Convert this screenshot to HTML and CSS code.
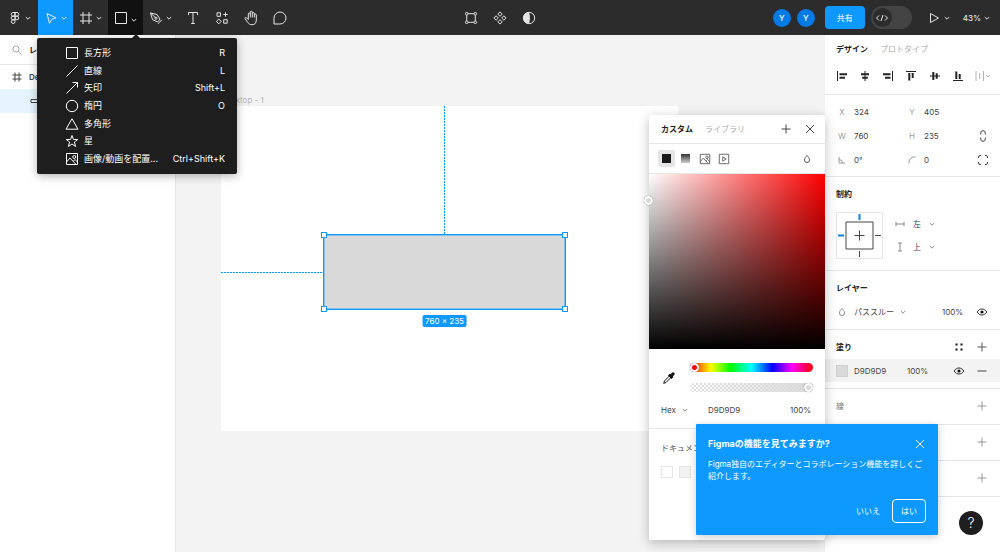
FILE: index.html
```html
<!DOCTYPE html>
<html lang="ja">
<head>
<meta charset="utf-8">
<meta name="viewport" content="width=device-width, initial-scale=1">
<title>Figma</title>
<link rel="stylesheet" href="styles.css">
</head>
<body>
<svg class="sprite" aria-hidden="true">
  <symbol id="chevron" viewBox="0 0 6 6"><path d="M.8 2 3 4.2 5.2 2"/></symbol>
  <symbol id="plus" viewBox="0 0 12 12"><path d="M6 1.500v9M1.500 6h9"/></symbol>
  <symbol id="close" viewBox="0 0 12 12"><path d="m2 2 8 8M10 2l-8 8"/></symbol>
  <symbol id="frame" viewBox="0 0 14 14"><path d="M4 1v12M10 1v12M1 4h12M1 10h12"/></symbol>
  <symbol id="drop" viewBox="0 0 12 12"><path d="M6 2.500C5 3.900 3.400 5.200 3.400 6.900a2.600 2.600 0 0 0 5.200 0C8.600 5.200 7 3.900 6 2.500Z"/></symbol>
  <symbol id="eye" viewBox="0 0 12 12"><path d="M1.200 6C2.400 4 4.100 3 6 3s3.600 1 4.800 3C9.600 8 7.900 9 6 9S2.400 8 1.200 6Z" stroke-width=".9"/><circle cx="6" cy="6" r="1.600" fill="currentColor" stroke="none"/></symbol>
  <symbol id="picture" viewBox="0 0 14 14"><path d="M1.500 1.500h11v11h-11zM1.500 10l3.500-4 6 6.500"/><circle cx="9.300" cy="5" r="1.500"/><path d="m8.500 9 1.500-1.500 2.500 2.500"/></symbol>
  <symbol id="square" viewBox="0 0 14 14"><path d="M1.500 1.500h11v11h-11z"/></symbol>
</svg>

<div class="app">
  <header class="topbar">
    <nav class="tools" aria-label="ツール">
      <button class="tool tool-menu" aria-label="メインメニュー"><svg class="i14" viewBox="0 0 14 14"><path d="M7 1.500H5a1.830 1.830 0 0 0 0 3.660h2zM7 5.160H5a1.830 1.830 0 0 0 0 3.660h2zM7 8.820H5a1.830 1.830 0 1 0 2 1.830zM7 1.500h2a1.830 1.830 0 0 1 0 3.660H7z"/><circle cx="8.900" cy="7" r="1.830"/></svg><svg class="i6"><use href="#chevron"/></svg></button>
      <button class="tool tool-wide tool-active" aria-label="移動"><svg class="i14" viewBox="0 0 14 14"><path d="m3 2.500 9 4.300-4.200 1.500-2.300 4z"/></svg><svg class="i6"><use href="#chevron"/></svg></button>
      <button class="tool tool-wide" aria-label="フレーム"><svg class="i14"><use href="#frame"/></svg><svg class="i6"><use href="#chevron"/></svg></button>
      <button class="tool tool-wide tool-open" aria-label="シェイプ" aria-expanded="true"><svg class="i14"><use href="#square"/></svg><svg class="i6"><use href="#chevron"/></svg></button>
      <button class="tool tool-wide" aria-label="ペン"><svg class="i14" viewBox="0 0 14 14"><path d="M1.500 2 8 3.500l3 4.500-2.500 3-5-2.500zM1.500 2l5 4.800M9 12.800l3.800-4"/><circle cx="7" cy="7.200" r="1.100"/></svg><svg class="i6"><use href="#chevron"/></svg></button>
      <button class="tool" aria-label="テキスト"><svg class="i14" viewBox="0 0 14 14"><path d="M2.500 4V1.500h9V4M7 1.500v11M5.200 12.500h3.600"/></svg></button>
      <button class="tool" aria-label="リソース"><svg class="i14" viewBox="0 0 14 14"><path d="M2 1.800h3.500v3.500H2zM8.700 8.700h3.500v3.500H8.700zM10.500 1.300v4.400M8.300 3.500h4.400M3.800 8l2.400 2.400-2.400 2.400-2.400-2.400z"/></svg></button>
      <button class="tool" aria-label="手のひら"><svg class="i16" viewBox="0 0 16 16"><path d="M5.300 9.500V4a1 1 0 0 1 2 0V2.200a1 1 0 0 1 2 0V3.500a1 1 0 0 1 2 0V5a1 1 0 0 1 2 0v5c0 3-1.500 4.700-4.300 4.700-2.300 0-3.400-1-4.300-2.500L2 8.700c-.5-1 .8-1.800 1.600-.9zM7.300 4v3.500M9.300 3.500v4M11.300 5v2.500"/></svg></button>
      <button class="tool" aria-label="コメント"><svg class="i16" viewBox="0 0 16 16"><path d="M2 14V8a6 6 0 1 1 6 6z"/></svg></button>
    </nav>
    <div class="tools">
      <button class="tool" aria-label="オブジェクトを編集"><svg class="i14" viewBox="0 0 14 14"><path d="M4 2.700h6M4 11.300h6M2.700 4v6M11.300 4v6"/><circle cx="2.700" cy="2.700" r="1.300"/><circle cx="11.300" cy="2.700" r="1.300"/><circle cx="2.700" cy="11.300" r="1.300"/><circle cx="11.300" cy="11.300" r="1.300"/></svg></button>
      <button class="tool" aria-label="コンポーネントを作成"><svg class="i14" viewBox="0 0 14 14"><path d="m7 .9 2.200 2.200L7 5.300 4.800 3.100zM7 8.700l2.200 2.200L7 13.100l-2.200-2.200zM3.100 4.800 5.300 7 3.100 9.200.9 7zM10.900 4.800 13.100 7l-2.200 2.200L8.700 7z"/></svg></button>
      <button class="tool" aria-label="マスク"><svg class="i14" viewBox="0 0 14 14"><circle cx="7" cy="7" r="5.700"/><path d="M7 1.300a5.700 5.700 0 0 0 0 11.400c1.300-3.600 1.300-7.800 0-11.400Z" fill="currentColor" stroke="none"/></svg></button>
    </div>
    <div class="account">
      <span class="avatar">Y</span>
      <span class="avatar">Y</span>
      <button class="share">共有</button>
      <label class="devmode"><input type="checkbox" role="switch" aria-label="開発モード"><span class="knob"><svg class="i14" viewBox="0 0 14 14"><path d="M4 4.500 1.500 7 4 9.500M10 4.500 12.500 7 10 9.500M8 4 6 10"/></svg></span></label>
      <button class="present" aria-label="プレゼンテーション"><svg class="i12" viewBox="0 0 12 12"><path d="m2.500 1.500 8 4.500-8 4.500z"/></svg><svg class="i6"><use href="#chevron"/></svg></button>
      <button class="zoom">43%<svg class="i6"><use href="#chevron"/></svg></button>
    </div>
  </header>

  <aside class="layers">
    <div class="layers-head"><svg class="i12" viewBox="0 0 12 12"><circle cx="5" cy="5" r="3"/><path d="m7.300 7.300 3.200 3.200"/></svg><h2>レイヤー</h2></div>
    <div class="layer"><svg class="i10" viewBox="0 0 10 10"><path d="M3 .5v9M7 .5v9M.5 3h9M.5 7h9"/></svg><span>Desktop - 1</span></div>
    <div class="layer layer-child"><svg class="i10" viewBox="0 0 10 10" role="img" aria-label="長方形レイヤー"><path d="M1 3.500h8v3H1z"/></svg></div>
  </aside>

  <main class="canvas">
    <div class="artboard">
      <span class="artboard-name">Desktop - 1</span>
      <i class="guide-v"></i><i class="guide-h"></i>
      <div class="shape"><i class="handle tl"></i><i class="handle tr"></i><i class="handle bl"></i><i class="handle br"></i><span class="size">760 × 235</span></div>
    </div>
  </main>

  <aside class="inspector">
    <section class="section align-section">
      <div class="tabs"><button class="tab tab-on">デザイン</button><button class="tab">プロトタイプ</button></div>
      <div class="aligns">
        <button aria-label="左揃え"><svg class="i12" viewBox="0 0 12 12"><path d="M1.500 1v10"/><path class="bar" d="M3.500 4.300H11M3.500 7.700H9"/></svg></button>
        <button aria-label="左右中央揃え"><svg class="i12" viewBox="0 0 12 12"><path d="M6 1v10"/><path class="bar" d="M2 4.300h8M3.200 7.700h5.600"/></svg></button>
        <button aria-label="右揃え"><svg class="i12" viewBox="0 0 12 12"><path d="M10.500 1v10"/><path class="bar" d="M1 4.300h7.500M3 7.700h5.500"/></svg></button>
        <button aria-label="上揃え"><svg class="i12" viewBox="0 0 12 12"><path d="M1 1.500h10"/><path class="bar" d="M4.300 3v7.500M7.700 3v5"/></svg></button>
        <button aria-label="上下中央揃え"><svg class="i12" viewBox="0 0 12 12"><path d="M1 6h10"/><path class="bar" d="M4.300 2v8M7.700 3.200v5.600"/></svg></button>
        <button aria-label="下揃え"><svg class="i12" viewBox="0 0 12 12"><path d="M1 10.500h10"/><path class="bar" d="M4.300 1.500V9M7.700 4v5"/></svg></button>
        <button class="muted" aria-label="等間隔に分布"><svg class="distribute" viewBox="0 0 16 12"><path d="M1 1v10M8.500 1v10M4.700 3v6M11 5l2 2 2-2"/></svg></button>
      </div>
    </section>

    <section class="section tight">
      <div class="props">
        <label class="field"><span>X</span><input value="324"></label>
        <label class="field"><span>Y</span><input value="405"></label>
        <label class="field prop-left"><span>W</span><input value="760"></label>
        <label class="field"><span>H</span><input value="235"></label>
        <button aria-label="縦横比を固定"><svg class="i12" viewBox="0 0 12 12"><path d="M3.700 4.500V3a2.300 2.300 0 0 1 4.600 0v1.500M3.700 7.500V9a2.300 2.300 0 0 0 4.600 0V7.500"/></svg></button>
        <label class="field prop-left"><svg class="i10" viewBox="0 0 10 10" role="img" aria-label="回転"><path d="M2 2v6h6M2 4.500A3.500 3.500 0 0 1 5.500 8"/></svg><input value="0°"></label>
        <label class="field"><svg class="i10" viewBox="0 0 10 10" role="img" aria-label="角の半径"><path d="M2 8.500V7a5 5 0 0 1 5-5h1.500"/></svg><input value="0"></label>
        <button aria-label="個別の角"><svg class="i12" viewBox="0 0 12 12"><path d="M1.500 4V3a1.500 1.500 0 0 1 1.500-1.500h1M8 1.500h1A1.500 1.500 0 0 1 10.500 3v1M10.500 8v1A1.500 1.500 0 0 1 9 10.500H8M4 10.500H3A1.500 1.500 0 0 1 1.500 9V8"/></svg></button>
      </div>
    </section>

    <section class="section">
      <div class="title"><h2>制約</h2></div>
      <div class="constraints">
        <svg class="constraint-box" viewBox="0 0 47 47"><path class="outline" d="M.5.500h46v46H.5z"/><path d="M10 10h27v27H10zM23.500 18.500v10M18.500 23.500h10M39 23.500h6M23.500 39v6"/><path class="on" d="M23.500 2v6M2 23.500h6"/></svg>
        <div class="axes">
          <label class="pick"><svg class="i10" viewBox="0 0 10 10" role="img" aria-label="水平方向"><path d="M1 3v4M9 3v4M1 5h8"/></svg><select><option>左</option></select><svg class="i6"><use href="#chevron"/></svg></label>
          <label class="pick"><svg class="i10" viewBox="0 0 10 10" role="img" aria-label="垂直方向"><path d="M3 1h4M3 9h4M5 1v8"/></svg><select><option>上</option></select><svg class="i6"><use href="#chevron"/></svg></label>
        </div>
      </div>
    </section>

    <section class="section loose">
      <div class="title"><h2>レイヤー</h2></div>
      <div class="row">
        <label class="pick blend"><svg class="i12" role="img" aria-label="ブレンド"><use href="#drop"/></svg><select><option>パススルー</option></select><svg class="i6"><use href="#chevron"/></svg></label>
        <input class="opacity" value="100%" aria-label="不透明度">
        <button class="dark" aria-label="表示"><svg class="i12"><use href="#eye"/></svg></button>
      </div>
    </section>

    <section class="section loose">
      <div class="title"><h2>塗り</h2><button class="dark" aria-label="スタイル"><svg class="i12" viewBox="0 0 12 12"><path class="dots" d="M2.500 2.500h2v2h-2zM7.500 2.500h2v2h-2zM2.500 7.500h2v2h-2zM7.500 7.500h2v2h-2z"/></svg></button><button aria-label="塗りを追加"><svg class="i12"><use href="#plus"/></svg></button></div>
      <div class="row row-on">
        <button class="chip" aria-label="塗りの色"></button>
        <input class="hex" value="D9D9D9" aria-label="塗りのカラーコード">
        <input class="opacity" value="100%" aria-label="塗りの不透明度">
        <button class="dark push" aria-label="表示"><svg class="i12"><use href="#eye"/></svg></button>
        <button aria-label="塗りを削除"><svg class="i12" viewBox="0 0 12 12"><path d="M1.500 6h9"/></svg></button>
      </div>
    </section>

    <section class="section loose collapsed"><div class="title"><h2>線</h2><button aria-label="線を追加"><svg class="i12"><use href="#plus"/></svg></button></div></section>
    <section class="section loose collapsed" aria-label="エフェクト"><div class="title"><button class="push" aria-label="エフェクトを追加"><svg class="i12"><use href="#plus"/></svg></button></div></section>
    <section class="section loose collapsed" aria-label="エクスポート"><div class="title"><button class="push" aria-label="エクスポートを追加"><svg class="i12"><use href="#plus"/></svg></button></div></section>
  </aside>
</div>

<div class="menu" role="menu">
  <button role="menuitem"><svg class="i14"><use href="#square"/></svg><span>長方形</span><kbd>R</kbd></button>
  <button role="menuitem"><svg class="i14" viewBox="0 0 14 14"><path d="m1.500 12.500 11-11"/></svg><span>直線</span><kbd>L</kbd></button>
  <button role="menuitem"><svg class="i14" viewBox="0 0 14 14"><path d="m1.500 12.500 11-11M7.500 1.500h5v5"/></svg><span>矢印</span><kbd>Shift+L</kbd></button>
  <button role="menuitem"><svg class="i14" viewBox="0 0 14 14"><circle cx="7" cy="7" r="5.700"/></svg><span>楕円</span><kbd>O</kbd></button>
  <button role="menuitem"><svg class="i14" viewBox="0 0 14 14"><path d="m7 1.800 6 10.400H1z"/></svg><span>多角形</span></button>
  <button role="menuitem"><svg class="i14" viewBox="0 0 14 14"><path d="m7 1.500 1.500 4h4.200L9.400 8.100l1.200 4.400L7 10l-3.600 2.500 1.200-4.400L1.300 5.500h4.200z"/></svg><span>星</span></button>
  <button role="menuitem"><svg class="i14"><use href="#picture"/></svg><span>画像/動画を配置...</span><kbd>Ctrl+Shift+K</kbd></button>
</div>

<div class="picker" role="dialog" aria-label="カラー">
  <div class="picker-head">
    <button class="tab tab-on">カスタム</button><button class="tab">ライブラリ</button>
    <button class="push" aria-label="スタイルを追加"><svg class="i12"><use href="#plus"/></svg></button>
    <button aria-label="閉じる"><svg class="i12"><use href="#close"/></svg></button>
  </div>
  <div class="kinds">
    <button class="kind kind-on" aria-label="単色"><span class="solid"></span></button>
    <button class="kind" aria-label="グラデーション"><span class="solid gradient"></span></button>
    <button class="kind" aria-label="画像"><svg class="i12"><use href="#picture"/></svg></button>
    <button class="kind" aria-label="動画"><svg class="i12" viewBox="0 0 14 14"><path d="M1.500 1.500h11v11h-11zM5.500 4.500 9.500 7l-4 2.500z"/></svg></button>
    <button class="push" aria-label="ブレンドモード"><svg class="i12"><use href="#drop"/></svg></button>
  </div>
  <div class="spectrum"><i class="spot"></i></div>
  <div class="mixer">
    <button class="dark" aria-label="スポイト"><svg class="i14" viewBox="0 0 14 14"><path d="M7.500 5 2.500 10l-.8 2.300L4 11.500l5-5"/><path d="M6.500 4.500 8 3l.8.800 1.500-1.800c1-1 2.700.6 1.700 1.700L10.200 5.200l.8.800-1.500 1.500z" fill="currentColor"/></svg></button>
    <div class="sliders">
      <input class="slider hue" type="range" min="0" max="360" value="0" aria-label="色相">
      <input class="slider alpha" type="range" min="0" max="100" value="100" aria-label="アルファ">
    </div>
  </div>
  <div class="code">
    <label class="pick"><select aria-label="形式"><option>Hex</option></select><svg class="i6"><use href="#chevron"/></svg></label>
    <input class="hex" value="D9D9D9" aria-label="カラーコード">
    <input class="opacity" value="100%" aria-label="不透明度">
  </div>
  <div class="document"><span>ドキュメントカラー</span>
    <div class="swatches"><button class="swatch" aria-label="FFFFFF"></button><button class="swatch swatch-grey" aria-label="F2F2F2"></button></div>
  </div>
</div>

<button class="help" aria-label="ヘルプ">?</button>

<div class="toast" role="dialog" aria-labelledby="toast-title">
  <div class="toast-head"><h2 id="toast-title">Figmaの機能を見てみますか?</h2><button aria-label="閉じる"><svg class="i12"><use href="#close"/></svg></button></div>
  <p>Figma独自のエディターとコラボレーション機能を詳しくご紹介します。</p>
  <div class="toast-actions"><button>いいえ</button><button class="yes">はい</button></div>
</div>
</body>
</html>
```
FILE: styles.css
```css
* { box-sizing: border-box; }
body {
  margin: 0;
  font: 8px/12px Inter, "Noto Sans CJK JP", sans-serif;
  color: #444;
  overflow: hidden;
}
h2, p { margin: 0; font-size: inherit; }
h2 { color: #222; font-weight: 600; }
button, input, select, kbd { font: inherit; color: inherit; }
button { padding: 0; border: 0; background: none; display: flex; align-items: center; justify-content: center; white-space: nowrap; }
input { border: 0; padding: 0; background: none; min-width: 0; }
select { appearance: none; border: 0; padding: 0; background: none; }
svg { fill: none; stroke: currentColor; flex: none; }
.sprite { position: absolute; width: 0; height: 0; }
.i6 { width: 6px; height: 6px; }
.i10 { width: 10px; height: 10px; }
.i12 { width: 12px; height: 12px; }
.i14 { width: 14px; height: 14px; }
.i16 { width: 16px; height: 16px; }
.push { margin-left: auto; }
.dark { color: #111; }

.app {
  display: grid;
  grid-template: 35px 1fr / 176px 1fr 175px;
  height: 100vh;
}

/* Top bar */
.topbar {
  grid-column: 1 / -1;
  display: grid;
  grid-template-columns: 1fr auto 1fr;
  background: #2c2c2c;
  color: #e6e6e6;
}
.tools { display: flex; }
.tool { width: 29px; }
.tool-menu { width: 38px; gap: 3px; }
.tool-wide { width: 35px; gap: 3px; }
.tool-active { background: #0d99ff; }
.tool-open { background: #111; }
.tool-open .i6 { margin-top: 4px; }
.account { display: flex; align-items: center; justify-content: flex-end; padding-right: 10px; }
.avatar {
  width: 18px; height: 18px; margin-right: 6px; border-radius: 50%;
  background: #007be5; color: #fff; line-height: 18px; text-align: center; font-weight: 500;
}
.share { width: 40px; height: 23px; margin: 0 6px 0 4px; border-radius: 4px; background: #0d99ff; color: #fff; }
.devmode { width: 41px; height: 23px; border-radius: 12px; background: #444; padding: 2px; }
.devmode input { position: absolute; opacity: 0; }
.knob { display: flex; align-items: center; justify-content: center; width: 19px; height: 19px; border-radius: 50%; background: #2c2c2c; }
.present { margin: 0 13px 0 16px; gap: 4px; }
.zoom { gap: 3px; font-weight: 500; }

/* Layers */
.layers { background: #fff; border-right: 1px solid #e6e6e6; }
.layers-head, .layer { display: flex; align-items: center; height: 24px; padding-left: 12px; gap: 7px; }
.layers-head { height: 30px; padding-left: 11px; gap: 6px; border-bottom: 1px solid #e6e6e6; }
.layers-head svg { color: #aaa; }
.layer { font-weight: 600; }
.layer-child { padding-left: 30px; background: #e5f4ff; }

/* Canvas */
.canvas { position: relative; overflow: hidden; background: #f3f3f3; }
.artboard { position: absolute; left: 45px; top: 71px; width: 457px; height: 325px; background: #fff; }
.artboard-name { position: absolute; left: 0; top: -12px; color: #b3b3b3; }
.guide-v { position: absolute; left: 223px; top: 0; width: 1px; height: 129px; background: repeating-linear-gradient(#0d99ff 0 2px, #cfebff 2px 3px); }
.guide-h { position: absolute; left: 0; top: 166px; width: 103px; height: 1px; background: repeating-linear-gradient(90deg, #0d99ff 0 2px, #cfebff 2px 3px); }
.shape {
  position: absolute; left: 102px; top: 128px; width: 243px; height: 76px;
  background: #d9d9d9; border: 1px solid #0d99ff; box-shadow: inset 0 0 0 1px rgba(13, 153, 255, .4);
}
.handle { position: absolute; width: 6px; height: 6px; background: #fff; border: 1px solid #0d99ff; }
.tl { left: -3px; top: -3px; }
.tr { right: -3px; top: -3px; }
.bl { left: -3px; bottom: -3px; }
.br { right: -3px; bottom: -3px; }
.size {
  position: absolute; left: 50%; top: 80px; transform: translateX(-50%);
  padding: 0 3px; border-radius: 2px; background: #0d99ff; color: #fff; white-space: nowrap;
}

/* Inspector */
.inspector { background: #fff; overflow: hidden; }
.section { padding: 5px 0; border-bottom: 1px solid #e6e6e6; }
.align-section { padding: 0 0 6px; }
.tabs { display: flex; gap: 12px; height: 28px; margin-bottom: 1px; padding-left: 11px; }
.tab { color: #aaa; }
.tab-on { color: #222; font-weight: 600; }
.aligns { display: flex; align-items: center; justify-content: space-between; height: 24px; padding: 0 9px 0 11px; color: #222; }
.bar { stroke-width: 2; }
.distribute { width: 16px; height: 12px; }
.muted { color: #b3b3b3; }
.tight { padding-bottom: 4px; }
.loose { padding-bottom: 6px; }
.props { display: grid; grid-template-columns: 70px 70px 1fr; grid-auto-rows: 24px; padding-left: 12px; }
.props > button { justify-content: flex-start; }
.prop-left { grid-column: 1; }
.field { display: flex; align-items: center; gap: 7px; }
.field span, .field svg { width: 10px; text-align: center; color: #999; }
.field input { width: 40px; }
.title, .row { display: flex; align-items: center; height: 24px; padding: 0 12px 0 11px; gap: 11px; }
.title h2 { flex: 1; }
.title button { color: #555; }
.title .dark { color: #111; }
.row { height: 23px; }
.row-on { background: #f3f3f3; gap: 6px; }
.row-on .push { margin-right: 5px; }
.chip { width: 12px; height: 12px; background: #d9d9d9; border: 1px solid #d0d0d0; }
.hex { width: 47px; }
.opacity { width: 23px; }
.collapsed h2 { font-weight: 400; color: #777; }
.collapsed button { color: #999; }
.constraints { display: flex; gap: 12px; padding: 6px 12px 6px 11px; }
.constraint-box { width: 47px; height: 47px; }
.constraint-box .outline { stroke: #e6e6e6; }
.constraint-box .on { stroke: #0d80e8; stroke-width: 2; }
.axes { display: grid; grid-auto-rows: 23px; }
.pick { display: flex; align-items: center; gap: 6px; }
.pick svg { color: #888; }
.axes .pick { gap: 8px; }
.blend { flex: 1; }
.dots { fill: currentColor; stroke: none; }

/* Shape menu */
.menu {
  position: absolute; left: 37px; top: 38px; width: 200px; height: 136px; padding: 6px 12px 6px 28px;
  display: grid; grid-auto-rows: 1fr;
  background: #1e1e1e; border-radius: 2px; color: #fff; font-size: 9px;
  box-shadow: 0 2px 10px rgba(0, 0, 0, .3);
}
.menu::before {
  content: ""; position: absolute; left: 95px; top: -4px;
  border: 4px solid transparent; border-top: 0; border-bottom-color: #1e1e1e;
}
.menu button { justify-content: flex-start; gap: 5px; }
.menu kbd { margin-left: auto; }

/* Colour picker */
.picker {
  position: absolute; left: 649px; top: 115px; width: 176px; height: 425px;
  background: #fff; border-radius: 2px; box-shadow: 0 3px 12px rgba(0, 0, 0, .25);
}
.picker-head, .kinds { display: flex; align-items: center; height: 30px; padding: 0 9px 0 12px; gap: 12px; border-bottom: 1px solid #e6e6e6; }
.picker-head { height: 29px; }
.kinds { gap: 2px; padding: 0 12px 0 9px; color: #555; }
.kind { width: 17px; height: 17px; border-radius: 2px; }
.kind-on { background: #e6e6e6; }
.solid { width: 9px; height: 9px; background: #1a1a1a; }
.gradient { background: linear-gradient(#333, #ccc); }
.spectrum {
  position: relative; height: 175px;
  background: linear-gradient(transparent, #000), linear-gradient(90deg, #fff, #f00);
}
.spot { position: absolute; left: -5px; top: 22px; width: 9px; height: 9px; border-radius: 50%; background: #d9d9d9; border: 2px solid #fff; box-shadow: 0 0 1px #555; }
.mixer { display: flex; align-items: center; gap: 14px; padding: 14px 12px 0 13px; }
.sliders { flex: 1; display: grid; gap: 11px; }
.slider { appearance: none; width: 100%; height: 9px; margin: 0; border-radius: 5px; }
.slider::-webkit-slider-thumb { appearance: none; width: 9px; height: 9px; border-radius: 50%; border: 2px solid #fff; background: #f00; box-shadow: 0 0 1px #555; }
.alpha::-webkit-slider-thumb { background: #d9d9d9; }
.hue { background: linear-gradient(90deg, #f00, #ff0 17%, #0f0 33%, #0ff 50%, #00f 67%, #f0f 83%, #f00); }
.alpha { background: linear-gradient(90deg, transparent, #d9d9d9), repeating-conic-gradient(#ddd 0 25%, #fff 0 50%) 0 0 / 4px 4px; }
.code { display: flex; align-items: center; height: 37px; padding: 0 12px; border-bottom: 1px solid #e6e6e6; }
.code .pick { width: 47px; }
.code .opacity { margin-left: auto; }
.document { padding: 13px 12px; color: #555; }
.swatches { display: flex; gap: 6px; margin-top: 12px; }
.swatch { width: 12px; height: 12px; border: 1px solid #e6e6e6; background: #fff; }
.swatch-grey { background: #f2f2f2; }

/* Help and onboarding */
.help { position: absolute; right: 17px; bottom: 17px; width: 24px; height: 24px; border-radius: 50%; background: #1e1e1e; color: #fff; font-size: 14px; font-weight: 300; }
.toast {
  position: absolute; left: 696px; top: 424px; width: 242px; height: 111px; padding: 12px;
  display: flex; flex-direction: column;
  background: #0d99ff; color: #fff; border-radius: 1px; box-shadow: 0 2px 8px rgba(0, 0, 0, .2);
}
.toast-head { display: flex; align-items: center; justify-content: space-between; height: 16px; }
.toast-head h2 { color: #fff; font-size: 9px; font-weight: 700; }
.toast p { margin-top: 6px; }
.toast-actions { display: flex; justify-content: flex-end; gap: 12px; margin-top: auto; }
.yes { width: 34px; height: 24px; border: 1px solid #fff; border-radius: 4px; }
```
